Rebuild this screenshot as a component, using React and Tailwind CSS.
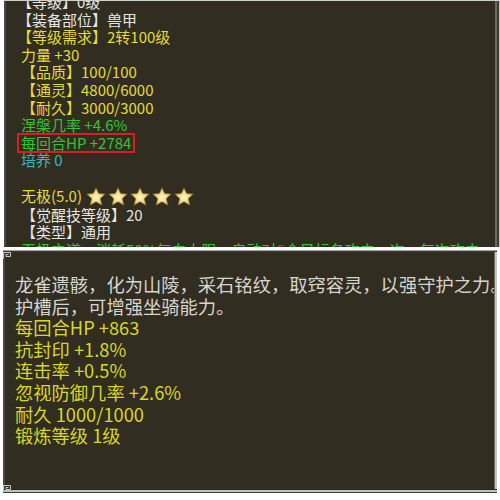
import React from "react";

const font = { fontFamily: '"Noto Sans CJK SC", "Noto Sans", sans-serif' };

function Star() {
  return (
    <svg width="20" height="19" viewBox="0 0 24 23">
      <defs>
        <radialGradient id="sg" cx="50%" cy="55%" r="60%">
          <stop offset="0%" stopColor="#fff8d0" />
          <stop offset="55%" stopColor="#ecd47a" />
          <stop offset="100%" stopColor="#b8952e" />
        </radialGradient>
      </defs>
      <polygon
        points="12,0.8 15.2,8 23.2,8.6 17.2,14 19.2,22.2 12,17.8 4.8,22.2 6.8,14 0.8,8.6 8.8,8"
        fill="url(#sg)"
        stroke="#8a6d20"
        strokeWidth="0.7"
      />
    </svg>
  );
}

function Corner() {
  return (
    <svg width="8" height="7" viewBox="0 0 8 7">
      <path d="M0.5 6.5 V0.5 H7.5 V4.5 H3 V2.5 H5.5" fill="none" stroke="#c8c8c0" strokeWidth="1" />
    </svg>
  );
}

export default function App() {
  const W = "text-[#e6e6e0]";
  const Y = "text-[#e2dc3c]";
  const G = "text-[#34c434]";
  const C = "text-[#3cb4c6]";
  return (
    <div className="relative w-[500px] h-[500px] overflow-hidden bg-white" style={font}>
      {/* top panel */}
      <div className="flex h-[247px] w-[497px] ml-[4px] border-t border-[#d0d0d0]">
        <div className="w-[2px] bg-[#4a4a44]" />
        <div className="flex-1 bg-[#322d21] overflow-hidden">
          <div className="mt-[-8px] pl-[15px] text-[15px] leading-[17.6px] whitespace-nowrap">
            <div className={W}><span className="inline-block ml-[-4px]">【等级】0级</span></div>
            <div className={W}><span className="inline-block ml-[-4px]">【装备部位】兽甲</span></div>
            <div className={Y}><span className="inline-block ml-[-4px]">【等级需求】2转100级</span></div>
            <div className={Y}>力量 +30</div>
            <div className={Y}>【品质】100/100</div>
            <div className={Y}>【通灵】4800/6000</div>
            <div className={Y}>【耐久】3000/3000</div>
            <div className={G}>涅槃几率 +4.6%</div>
            <div className={G}>
              <span className="inline-block outline-2 outline-[#d42020] px-[2px] ml-[-2px] leading-[16px]">每回合HP +2784</span>
            </div>
            <div className={C}>培养 0</div>
            <div className="h-[17.6px]" />
            <div className={`${Y} flex items-center gap-[2px]`}>
              <span className="mr-[2px]">无极(5.0)</span>
              <Star /><Star /><Star /><Star /><Star />
            </div>
            <div className={W}>【觉醒技等级】20</div>
            <div className={W}>【类型】通用</div>
            <div className={G}>
              无极之道，消耗50%气血上限，自动对<span className="text-[#e02020]">5</span>个目标各攻击一次，每次攻击
            </div>
          </div>
        </div>
        <div className="w-[2px] bg-[#6e6a58]" />
        <div className="w-[2px] bg-[#3c3c38]" />
        <div className="w-[2px] bg-[#c4c4c0]" />
      </div>

      {/* gap */}
      <div className="h-[3px] bg-white" />

      {/* bottom panel */}
      <div className="relative ml-[3px] w-[494px] h-[243px] flex flex-col">
        <div className="h-[1px] bg-[#a0a0a0]" />
        <div className="h-[1px] bg-[#3c3c38]" />
        <div className="flex flex-1">
          <div className="w-[2px] bg-[#4a4a44]" />
          <div className="flex-1 bg-[#322d21] overflow-hidden">
            <div className="pt-[22px] pl-[10px] text-[18.3px] leading-[21.6px] whitespace-nowrap">
              <div className="text-[#d6d6d0]">龙雀遗骸，化为山陵，采石铭纹，取窍容灵，以强守护之力。</div>
              <div className="text-[#d6d6d0]">护槽后，可增强坐骑能力。</div>
              <div className="text-[#d8d628]">每回合HP +863</div>
              <div className="text-[#d8d628]">抗封印 +1.8%</div>
              <div className="text-[#d8d628]">连击率 +0.5%</div>
              <div className="text-[#d8d628]">忽视防御几率 +2.6%</div>
              <div className="text-[#d8d628]">耐久 1000/1000</div>
              <div className="text-[#d8d628]">锻炼等级 1级</div>
            </div>
          </div>
          <div className="w-[1px] bg-[#6e6a58]" />
          <div className="w-[2px] bg-[#c4c8c0]" />
        </div>
        <div className="h-[1px] bg-[#2a2a26]" />
        <div className="h-[2px] bg-[#b8c4b8]" />
        <div className="h-[1px] bg-[#3c3c38]" />
        <div className="absolute left-0 top-[2px]"><Corner /></div>
        <div className="absolute left-0 bottom-[1px]"><Corner /></div>
      </div>
    </div>
  );
}
